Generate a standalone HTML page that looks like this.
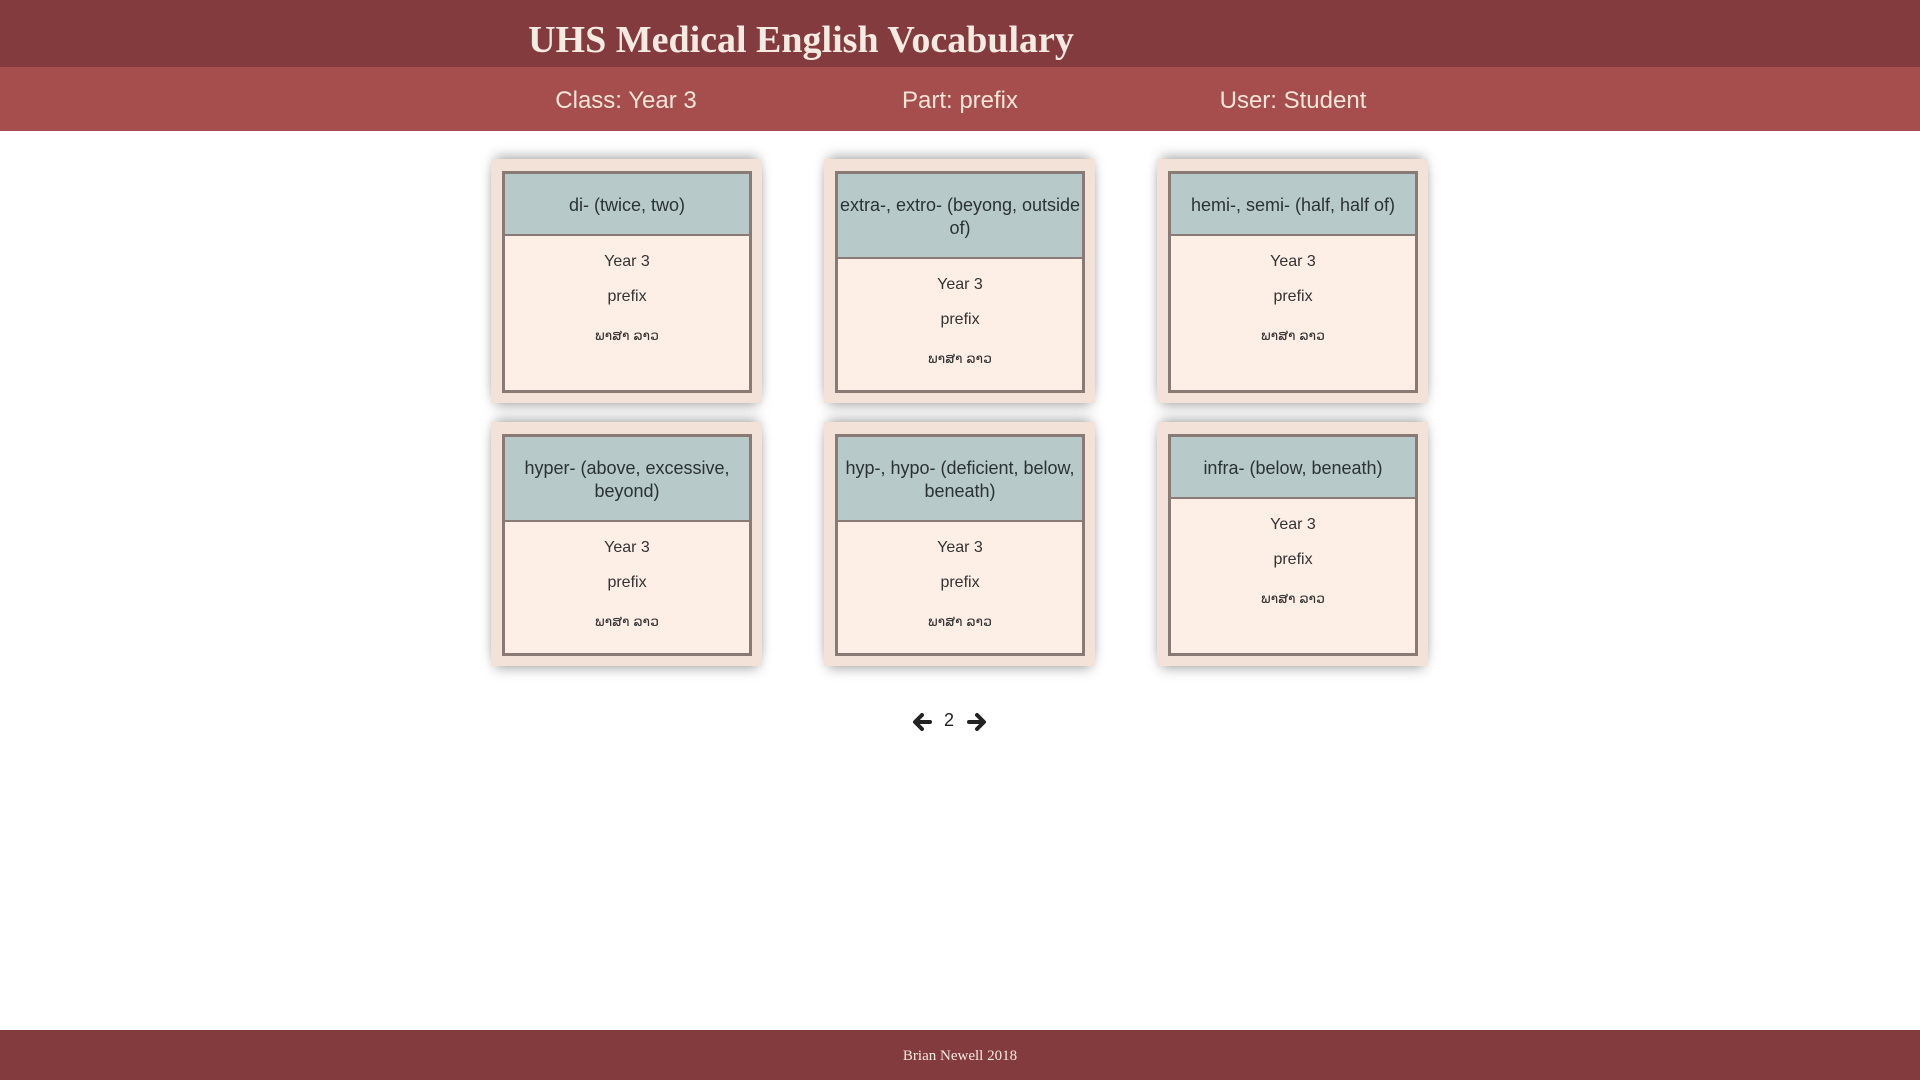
<!DOCTYPE html>
<html><head><meta charset="utf-8">
<style>
*{margin:0;padding:0;box-sizing:border-box}
body{width:1920px;height:1080px;background:#fff;font-family:"Liberation Sans",sans-serif;position:relative;overflow:hidden}
.top{position:absolute;left:0;top:0;width:1920px;height:67px;background:#843b3d}
.top h1{position:absolute;left:0;width:1602px;top:19px;text-align:center;font-family:"Liberation Serif",serif;font-weight:bold;font-size:38px;color:#f6ebe2;line-height:42px}
.sub{position:absolute;left:0;top:67px;width:1920px;height:64px;background:#a64d4d;color:#f8e6da;font-size:24px}
.sub span{position:absolute;top:20px;width:400px;margin-left:-200px;text-align:center;line-height:28px}
.card{position:absolute;width:271px;height:244px;background:#f3e2d8;box-shadow:0 -6px 12px -4px rgba(0,0,0,.35),0 6px 12px -4px rgba(0,0,0,.35)}
.in{position:absolute;left:11px;top:12px;width:250px;height:222px;border:3px solid #8a7a76;background:#fdefe6;text-align:center;color:#333}
.hd{background:#b8c9c9;border-bottom:2px solid #8a7a76;font-size:18px;line-height:23px;padding:20px 0 17px;color:#2a3235}
.b1{font-size:16px;margin-top:16px;line-height:20px}
.b2{font-size:16px;margin-top:15px;line-height:20px}
.b3{font-size:14px;margin-top:18px;line-height:20px}
.foot{position:absolute;left:0;top:1030px;width:1920px;height:50px;background:#843b3d;color:#f6ebe2;font-family:"Liberation Serif",serif;font-size:15px;text-align:center;line-height:52px}
</style></head><body>
<div class="top"><h1>UHS Medical English Vocabulary</h1></div>
<div class="sub"><span style="left:626px">Class: Year 3</span><span style="left:960px">Part: prefix</span><span style="left:1293px">User: Student</span></div>

<div class="card" style="left:491px;top:159px"><div class="in"><div class="hd">di- (twice, two)</div><div class="b1">Year 3</div><div class="b2">prefix</div><div class="b3">ພາສາ ລາວ</div></div></div>
<div class="card" style="left:824px;top:159px"><div class="in"><div class="hd">extra-, extro- (beyong, outside of)</div><div class="b1">Year 3</div><div class="b2">prefix</div><div class="b3">ພາສາ ລາວ</div></div></div>
<div class="card" style="left:1157px;top:159px"><div class="in"><div class="hd">hemi-, semi- (half, half of)</div><div class="b1">Year 3</div><div class="b2">prefix</div><div class="b3">ພາສາ ລາວ</div></div></div>

<div class="card" style="left:491px;top:422px"><div class="in"><div class="hd" style="padding-left:6px;padding-right:6px">hyper- (above, excessive, beyond)</div><div class="b1">Year 3</div><div class="b2">prefix</div><div class="b3">ພາສາ ລາວ</div></div></div>
<div class="card" style="left:824px;top:422px"><div class="in"><div class="hd" style="padding-left:6px;padding-right:6px">hyp-, hypo- (deficient, below, beneath)</div><div class="b1">Year 3</div><div class="b2">prefix</div><div class="b3">ພາສາ ລາວ</div></div></div>
<div class="card" style="left:1157px;top:422px"><div class="in"><div class="hd">infra- (below, beneath)</div><div class="b1">Year 3</div><div class="b2">prefix</div><div class="b3">ພາສາ ລາວ</div></div></div>

<svg style="position:absolute;left:912px;top:713px" width="20" height="18" viewBox="0 0 20 18"><path d="M18 9H4M10 2L3 9l7 7" fill="none" stroke="#222" stroke-width="4" stroke-linecap="round" stroke-linejoin="round"/></svg>
<div style="position:absolute;left:944px;top:710px;font-size:18px;color:#222">2</div>
<svg style="position:absolute;left:967px;top:713px" width="20" height="18" viewBox="0 0 20 18"><path d="M2 9h14M10 2l7 7-7 7" fill="none" stroke="#222" stroke-width="4" stroke-linecap="round" stroke-linejoin="round"/></svg>

<div class="foot">Brian Newell 2018</div>
</body></html>
